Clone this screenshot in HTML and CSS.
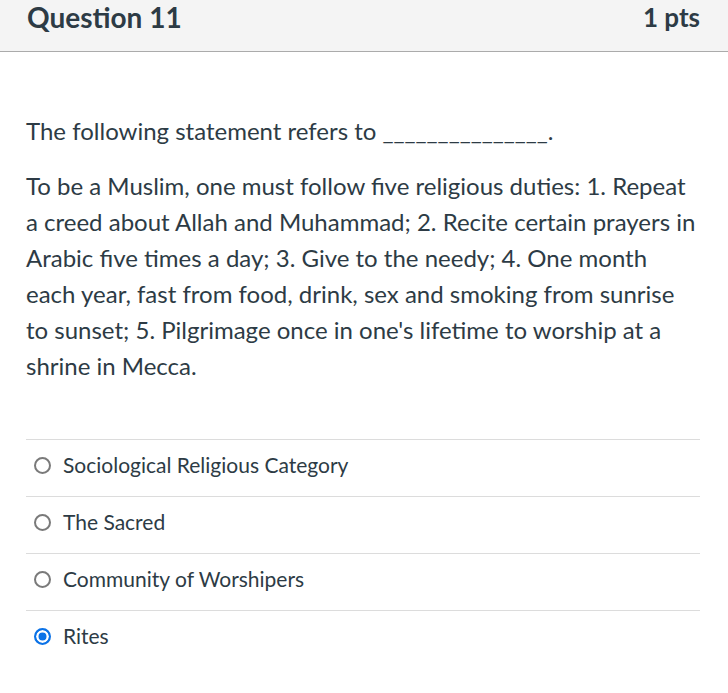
FILE: index.html
```html
<!DOCTYPE html>
<html>
<head>
<meta charset="utf-8">
<link rel="stylesheet" href="styles.css">
</head>
<body>
<div class="question">
  <div class="header">
    <h2 class="title">Question 11</h2>
    <div class="pts">1 pts</div>
  </div>
  <div class="body">
    <p class="lead">The following statement refers to _______________.</p>
    <p class="text">To be a Muslim, one must follow five religious duties: 1. Repeat a creed about Allah and Muhammad; 2. Recite certain prayers in Arabic five times a day; 3. Give to the needy; 4. One month each year, fast from food, drink, sex and smoking from sunrise to sunset; 5. Pilgrimage once in one's lifetime to worship at a shrine in Mecca.</p>
    <div class="answers">
      <label class="answer"><span class="radio"></span><span class="label">Sociological Religious Category</span></label>
      <label class="answer"><span class="radio"></span><span class="label">The Sacred</span></label>
      <label class="answer"><span class="radio"></span><span class="label">Community of Worshipers</span></label>
      <label class="answer"><span class="radio checked"></span><span class="label">Rites</span></label>
    </div>
  </div>
</div>
</body>
</html>
```
FILE: styles.css
```css
html, body {
  margin: 0;
  padding: 0;
  background: #fff;
}
body {
  font-family: Lato, "Open Sans", sans-serif;
  color: #2d3b45;
}
.header {
  height: 51px;
  background: #f4f4f4;
  border-bottom: 1px solid #ababab;
  display: flex;
  justify-content: space-between;
  align-items: flex-start;
  padding: 0 28px 0 27px;
}
.title {
  margin: 0;
  font-size: 28px;
  font-weight: 700;
  line-height: 34px;
}
.pts {
  font-size: 26px;
  font-weight: 700;
  line-height: 34px;
}
.body {
  padding: 61px 28px 0 26px;
}
.lead {
  margin: 0;
  font-size: 24px;
  line-height: 36px;
}
.text {
  margin: 19px 0 0;
  font-size: 24px;
  line-height: 36px;
}
.answers {
  margin-top: 55px;
}
.answer {
  display: flex;
  align-items: center;
  gap: 12px;
  height: 50px;
  padding-bottom: 6px;
  border-top: 1px solid #dcdcdc;
  padding-left: 8px;
  font-size: 21px;
}
.radio {
  width: 13px;
  height: 13px;
  border: 2px solid #7a7a7a;
  border-radius: 50%;
  box-sizing: content-box;
  flex: none;
}
.radio.checked {
  border: 2px solid #0b72e7;
  background: #0b72e7;
  box-shadow: inset 0 0 0 2.5px #fff;
}
.label {
  line-height: 24px;
}
```
